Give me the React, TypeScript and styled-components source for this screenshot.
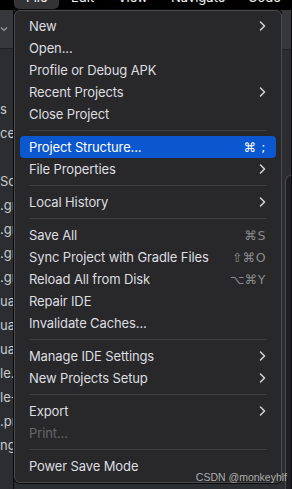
import styled, { createGlobalStyle } from "styled-components";

const GlobalStyle = createGlobalStyle`
  html, body {
    margin: 0;
    padding: 0;
    background: #2b2d30;
  }
  body {
    font-family: Inter, "Noto Sans", "DejaVu Sans", sans-serif;
    -webkit-font-smoothing: antialiased;
  }
`;

const Screen = styled.div`
  position: relative;
  width: 292px;
  height: 489px;
  display: flex;
  flex-direction: column;
  overflow: hidden;
  background: #2b2d30;
`;

const TopBar = styled.div`
  height: 10px;
  flex-shrink: 0;
  display: flex;
  padding-left: 14px;
  background: #000;
  overflow: hidden;
`;

const MenuTitle = styled.div<{ $active?: boolean }>`
  height: 9px;
  padding: 0 12px;
  border-radius: 0 0 5px 5px;
  background: ${(p) => (p.$active ? "#333336" : "transparent")};
  overflow: hidden;
`;

const TitleText = styled.span`
  display: block;
  margin-top: -9px;
  font-size: 13px;
  line-height: 12px;
  color: #f2f2f2;
  white-space: nowrap;
`;

const Workspace = styled.div`
  flex: 1;
  display: flex;
  min-height: 0;
`;

const LeftPane = styled.div`
  width: 13px;
  flex-shrink: 0;
  display: flex;
  flex-direction: column;
  border-right: 1px solid #0e0e0f;
  background: #2b2d30;
  overflow: hidden;
`;

const PaneHeader = styled.div`
  height: 39px;
  flex-shrink: 0;
  display: flex;
  align-items: center;
  background: #37383b;
  border-bottom: 1px solid #1f2023;
  box-sizing: border-box;
`;

const TreeRow = styled.div`
  height: 24px;
  line-height: 24px;
  font-size: 13px;
  color: #c8c9cc;
  white-space: nowrap;
  overflow: hidden;
`;

const Menu = styled.div`
  width: 268px;
  flex-shrink: 0;
  align-self: flex-start;
  box-sizing: border-box;
  padding: 4px 0 5px;
  background: #28282a;
  border: 1px solid #4b4b4e;
  border-radius: 6px;
  box-shadow: 0 0 0 1px #0b0b0c;
`;

const Row = styled.div<{ $active?: boolean; $disabled?: boolean }>`
  height: 22px;
  margin: 0 5px;
  padding: 0 10px 0 9px;
  display: flex;
  align-items: center;
  border-radius: 4px;
  font-size: 13px;
  letter-spacing: -0.12px;
  color: ${(p) => (p.$active ? "#ffffff" : p.$disabled ? "#666668" : "#dedee0")};
  background: ${(p) => (p.$active ? "#0b57cf" : "transparent")};
`;

const Label = styled.span`
  flex: 1;
  white-space: nowrap;
`;

const Shortcut = styled.span<{ $active?: boolean }>`
  font-family: "DejaVu Sans", sans-serif;
  font-size: 12.5px;
  letter-spacing: 0.5px;
  color: ${(p) => (p.$active ? "#ffffff" : "#8a8a8d")};
`;

const Separator = styled.div`
  height: 1px;
  margin: 5px 14px;
  background: #3f3f42;
`;

const RightPane = styled.div`
  flex: 1;
  display: flex;
  flex-direction: column;
  background: #2b2d30;
  border-right: 1px solid #0e0e0f;
`;

const RightHeader = styled.div`
  height: 39px;
  flex-shrink: 0;
  background: #37383b;
  border-bottom: 1px solid #1f2023;
`;

const RightSpacer = styled.div`
  height: 125px;
  flex-shrink: 0;
`;

const EditorPanel = styled.div`
  flex: 1;
  margin-left: 3px;
  background: #1e1f22;
  border-left: 1px solid #4a4b4e;
  border-top: 1px solid #4a4b4e;
  border-top-left-radius: 8px;
`;

const Watermark = styled.div`
  position: absolute;
  right: 5px;
  bottom: 6px;
  font-family: "Liberation Sans", Arial, sans-serif;
  font-size: 10.5px;
  color: rgba(220, 220, 220, 0.75);
  white-space: nowrap;
`;

const Chevron = () => (
  <svg width="7" height="10" viewBox="0 0 7 10">
    <path d="M1.5 1 L5.5 5 L1.5 9" fill="none" stroke="#d6d6d8" strokeWidth="1.5" strokeLinecap="round" strokeLinejoin="round" />
  </svg>
);

const Caret = () => (
  <svg width="8" height="6" viewBox="0 0 8 6">
    <path d="M1 1.5 L4 4.5 L7 1.5" fill="none" stroke="#9a9b9e" strokeWidth="1.2" />
  </svg>
);

type Entry =
  | { sep: true }
  | { sep?: false; label: string; shortcut?: string; sub?: boolean; active?: boolean; disabled?: boolean };

const entries: Entry[] = [
  { label: "New", sub: true },
  { label: "Open..." },
  { label: "Profile or Debug APK" },
  { label: "Recent Projects", sub: true },
  { label: "Close Project" },
  { sep: true },
  { label: "Project Structure...", shortcut: "⌘ ;", active: true },
  { label: "File Properties", sub: true },
  { sep: true },
  { label: "Local History", sub: true },
  { sep: true },
  { label: "Save All", shortcut: "⌘S" },
  { label: "Sync Project with Gradle Files", shortcut: "⇧⌘O" },
  { label: "Reload All from Disk", shortcut: "⌥⌘Y" },
  { label: "Repair IDE" },
  { label: "Invalidate Caches..." },
  { sep: true },
  { label: "Manage IDE Settings", sub: true },
  { label: "New Projects Setup", sub: true },
  { sep: true },
  { label: "Export", sub: true },
  { label: "Print...", disabled: true },
  { sep: true },
  { label: "Power Save Mode" },
];

const titles = ["File", "Edit", "View", "Navigate", "Code"];

const tree = ["", "", "s", "ce", "", "Scr", ".gr", ".gr", ".gr", ".gr", "ua", "ua", "ua", "le.", "le-", ".pr", "ng"];

export default function App() {
  return (
    <>
      <GlobalStyle />
      <Screen>
        <TopBar>
          {titles.map((t) => (
            <MenuTitle key={t} $active={t === "File"}>
              <TitleText>{t}</TitleText>
            </MenuTitle>
          ))}
        </TopBar>
        <Workspace>
          <LeftPane>
            <PaneHeader>
              <Caret />
            </PaneHeader>
            {tree.map((t, i) => (
              <TreeRow key={i}>{t}</TreeRow>
            ))}
          </LeftPane>
          <Menu>
            {entries.map((e, i) =>
              e.sep ? (
                <Separator key={i} />
              ) : (
                <Row key={i} $active={e.active} $disabled={e.disabled}>
                  <Label>{e.label}</Label>
                  {e.shortcut && <Shortcut $active={e.active}>{e.shortcut}</Shortcut>}
                  {e.sub && <Chevron />}
                </Row>
              )
            )}
          </Menu>
          <RightPane>
            <RightHeader />
            <RightSpacer />
            <EditorPanel />
          </RightPane>
        </Workspace>
        <Watermark>CSDN @monkeyhlf</Watermark>
      </Screen>
    </>
  );
}
